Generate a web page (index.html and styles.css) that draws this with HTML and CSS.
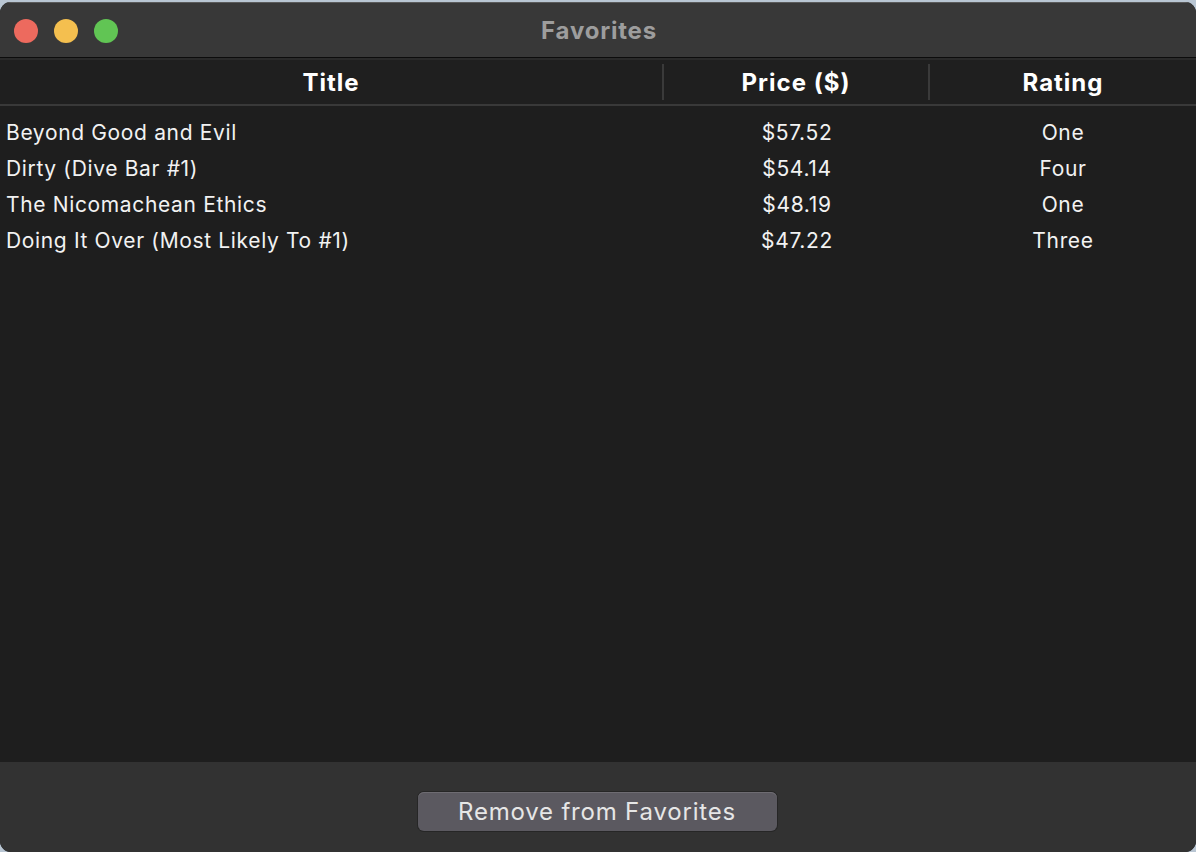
FILE: index.html
```html
<!DOCTYPE html>
<html>
<head>
<meta charset="utf-8">
<link rel="stylesheet" href="styles.css">
</head>
<body>
<div class="window">
  <div class="titlebar">
    <div class="lights">
      <span class="light red"></span>
      <span class="light yellow"></span>
      <span class="light green"></span>
    </div>
    <div class="title">Favorites</div>
  </div>
  <div class="table">
    <div class="thead">
      <div class="th c-title">Title</div>
      <div class="th c-price">Price ($)</div>
      <div class="th c-rating">Rating</div>
    </div>
    <div class="tbody">
      <div class="row"><div class="td c-title">Beyond Good and Evil</div><div class="td c-price">$57.52</div><div class="td c-rating">One</div></div>
      <div class="row"><div class="td c-title">Dirty (Dive Bar #1)</div><div class="td c-price">$54.14</div><div class="td c-rating">Four</div></div>
      <div class="row"><div class="td c-title">The Nicomachean Ethics</div><div class="td c-price">$48.19</div><div class="td c-rating">One</div></div>
      <div class="row"><div class="td c-title">Doing It Over (Most Likely To #1)</div><div class="td c-price">$47.22</div><div class="td c-rating">Three</div></div>
    </div>
  </div>
  <div class="footer">
    <button class="btn">Remove from Favorites</button>
  </div>
</div>
</body>
</html>
```
FILE: styles.css
```css
* { box-sizing: border-box; }
html, body { margin: 0; padding: 0; height: 100%; }
body {
  background: #b9c6d3;
  font-family: Inter, "Noto Sans", "Liberation Sans", sans-serif;
  overflow: hidden;
}
.window {
  width: 1196px;
  margin-top: 2px;
  height: 850px;
  border-radius: 11px;
  overflow: hidden;
  background: #1e1e1e;
  display: flex;
  flex-direction: column;
}
.titlebar {
  height: 56px;
  background: #383838;
  position: relative;
  display: flex;
  align-items: center;
  justify-content: center;
  border-top: 1px solid #5a5a5a;
  border-bottom: 1px solid #0c0c0c;
  flex: none;
}
.lights {
  position: absolute;
  left: 14px;
  top: 16px;
  display: flex;
  gap: 16px;
}
.light { width: 24px; height: 24px; border-radius: 50%; display: block; }
.red { background: #ed6a5e; }
.yellow { background: #f4bf4f; }
.green { background: #61c554; }
.title {
  color: #9d9d9d;
  font-weight: 700;
  font-size: 24px;
  letter-spacing: 0.8px;
  margin-left: 2px;
}
.table { flex: 1; display: flex; flex-direction: column; border-top: 2px solid #2a2a2a; }
.thead {
  height: 46px;
  display: flex;
  background: #1f1f1f;
  border-bottom: 2px solid #393939;
  align-items: center;
}
.th {
  color: #ffffff;
  font-weight: 700;
  font-size: 24px;
  letter-spacing: 1px;
  text-align: center;
  height: 36px;
  line-height: 38px;
}
.th.c-title, .th.c-price { border-right: 2px solid #3a3a3a; }
.c-title { width: 664px; }
.c-price { width: 266px; }
.c-rating { width: 266px; }
.tbody { padding-top: 8px; }
.row { display: flex; height: 36px; align-items: center; }
.td { color: #f2f2f2; font-size: 21px; letter-spacing: 0.65px; }
.td.c-title { padding-left: 6px; }
.td.c-price { text-align: center; }
.td.c-rating { text-align: center; }
.footer {
  height: 90px;
  background: #323232;
  display: flex;
  justify-content: center;
  padding-top: 30px;
  flex: none;
}
.btn {
  width: 359px;
  height: 39px;
  margin-left: -2px;
  background: #5b5960;
  border: none;
  border-radius: 6px;
  box-shadow: 0 0 0 1px #262626, inset 0 1px 0 #6e6c72;
  color: #e6e6e6;
  font-family: inherit;
  font-size: 24px;
  letter-spacing: 0.8px;
  padding: 0;
}
```
